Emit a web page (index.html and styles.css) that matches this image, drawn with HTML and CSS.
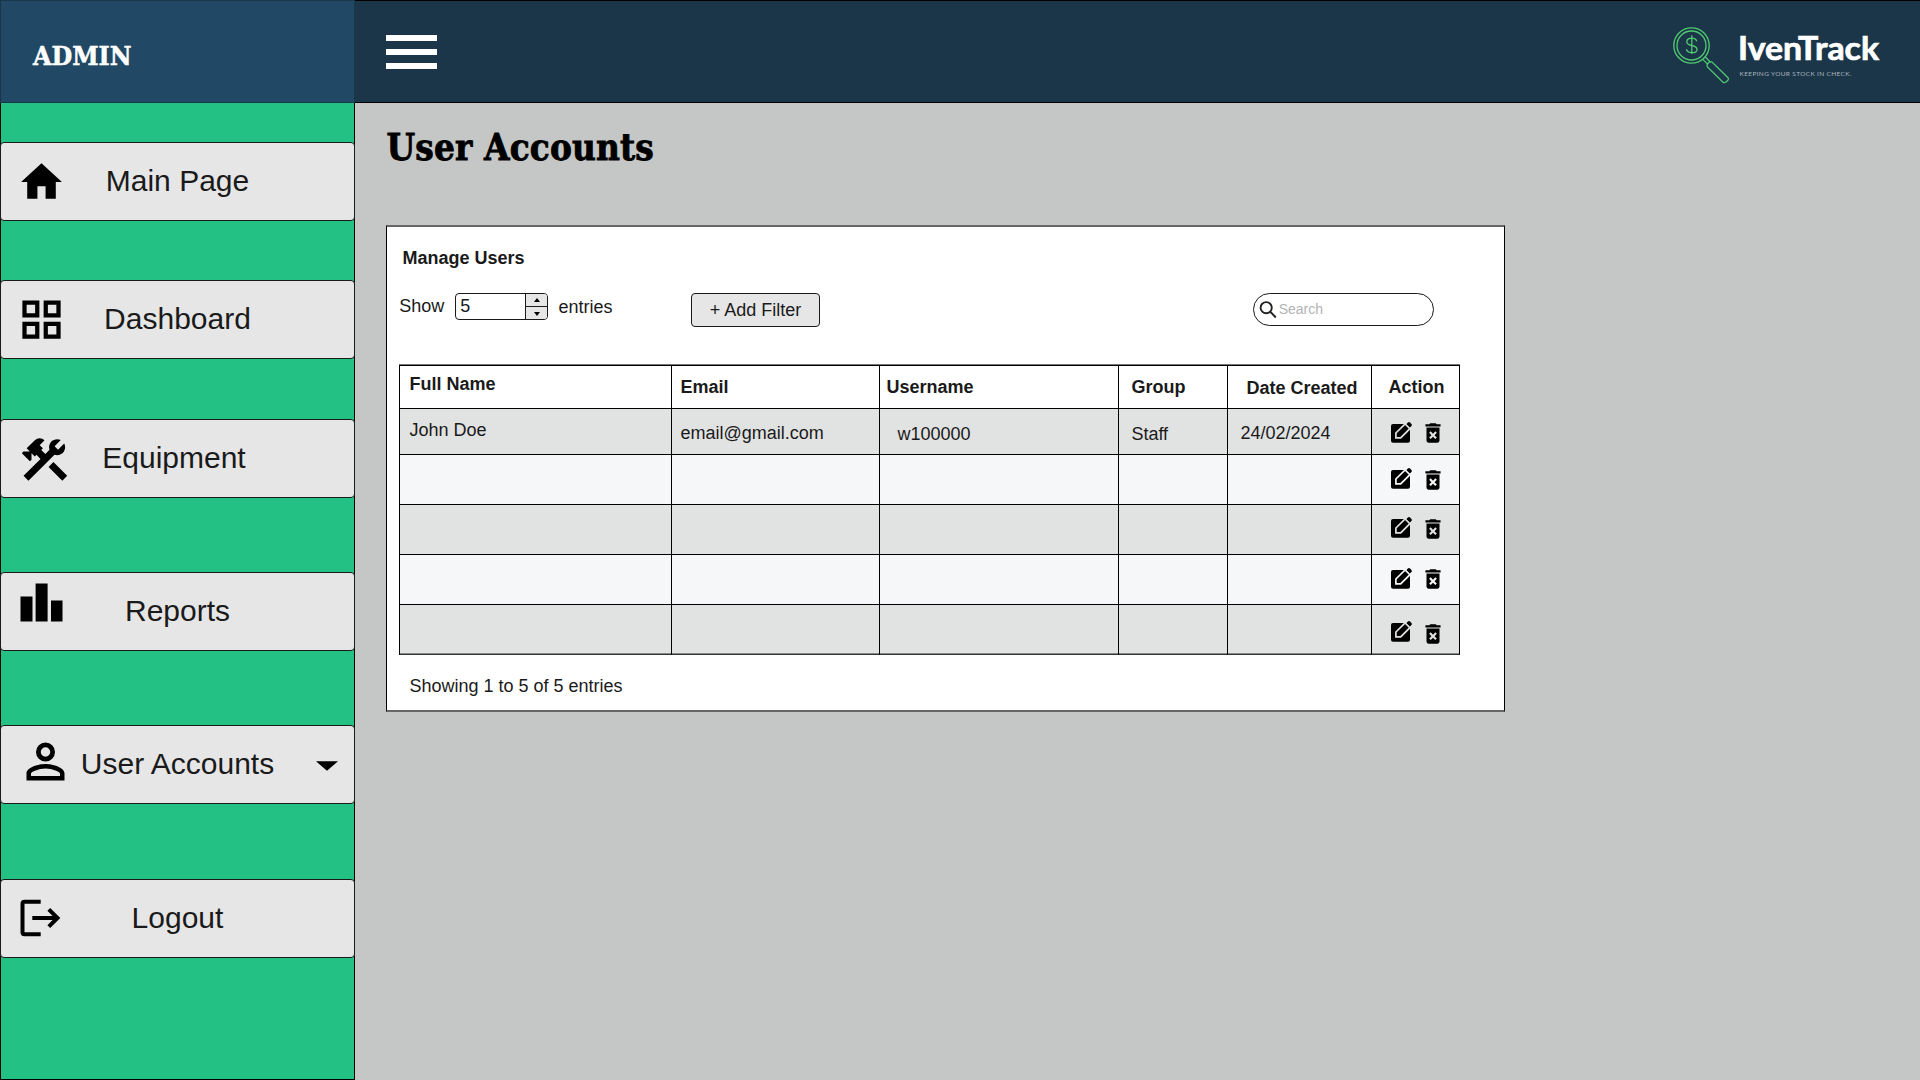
FILE: index.html
```html
<!DOCTYPE html>
<html lang="en">
<head>
<meta charset="utf-8">
<title>IvenTrack - User Accounts</title>
<link rel="stylesheet" href="styles.css">
</head>
<body>
<svg class="defs" aria-hidden="true">
  <symbol id="edit" viewBox="0 0 21 21">
    <rect x="0" y="2" width="19" height="18.7" rx="2"/>
    <path class="pencil" d="M4.900 15.900V11L14.100 1.900L18.900 6.700L9.700 15.900Z"/>
    <path d="M15.700 1.800l1.200-1.200q1.100-1 2.200 0l1.300 1.300q1 1.100 0 2.200l-1.200 1.200z"/>
  </symbol>
  <symbol id="trash" viewBox="0 0 24 24">
    <path d="M6 19c0 1.100.9 2 2 2h8c1.100 0 2-.9 2-2V7H6v12zm2.460-7.120l1.410-1.410L12 12.590l2.120-2.120 1.410 1.410L13.410 14l2.120 2.120-1.410 1.410L12 15.410l-2.120 2.120-1.410-1.410L10.590 14l-2.130-2.120zM15.500 4l-1-1h-5l-1 1H5v2h14V4z"/>
  </symbol>
</svg>
<div class="app">
  <aside class="sidebar">
    <div class="role">ADMIN</div>
    <nav class="menu">
      <a class="item">
        <svg class="ico home" viewBox="0 0 24 24" preserveAspectRatio="none"><path d="M10,20V14H14V20H19V12H22L12,3L2,12H5V20H10Z"/></svg>
        <span class="label">Main Page</span>
      </a>
      <a class="item dashboard">
        <svg class="ico grid" viewBox="0 0 24 24"><path d="M3 3v8h8V3H3zm6 6H5V5h4v4zm-6 4v8h8v-8H3zm6 6H5v-4h4v4zm4-16v8h8V3h-8zm6 6h-4V5h4v4zm-6 4v8h8v-8h-8zm6 6h-4v-4h4v4z"/></svg>
        <span class="label">Dashboard</span>
      </a>
      <a class="item equipment">
        <svg class="ico tools" viewBox="0 0 24 24"><path d="M13.78 15.3L19.78 21.3L21.89 19.14L15.89 13.14L13.78 15.3M17.5 10.1C17.11 10.1 16.69 10.05 16.36 9.91L4.97 21.25L2.86 19.14L10.27 11.74L8.5 9.96L7.78 10.66L6.33 9.25V12.11L5.63 12.81L2.11 9.25L2.81 8.55H5.62L4.22 7.14L7.78 3.58C8.95 2.41 10.83 2.41 12 3.58L9.89 5.74L11.3 7.14L10.59 7.85L12.38 9.63L14.2 7.75C14.06 7.42 14 7 14 6.63C14 4.66 15.56 3.11 17.5 3.11C18.09 3.11 18.61 3.25 19.08 3.53L16.41 6.2L17.91 7.7L20.58 5.03C20.86 5.5 21 6 21 6.63C21 8.55 19.45 10.1 17.5 10.1Z"/></svg>
        <span class="label">Equipment</span>
      </a>
      <a class="item reports">
        <svg class="ico bars" viewBox="0 0 43 40"><path d="M.5 13.500h12V38.500H.5zM15.600.5h12V38.500h-12zM31 17.500h11.500V38.500H31z"/></svg>
        <span class="label">Reports</span>
      </a>
      <a class="item accounts">
        <svg class="ico person" viewBox="0 0 24 24"><path d="M12,4A4,4 0 0,1 16,8A4,4 0 0,1 12,12A4,4 0 0,1 8,8A4,4 0 0,1 12,4M12,6A2,2 0 0,0 10,8A2,2 0 0,0 12,10A2,2 0 0,0 14,8A2,2 0 0,0 12,6M12,13C14.670,13 20,14.330 20,17V20H4V17C4,14.330 9.330,13 12,13M12,14.900C9.030,14.900 5.900,16.360 5.900,17V18.100H18.100V17C18.100,16.360 14.970,14.900 12,14.900Z"/></svg>
        <span class="label">User Accounts</span>
        <svg class="caret" viewBox="0 0 22 10"><path d="M0 .3H22L11 9.700Z"/></svg>
      </a>
      <a class="item logout">
        <svg class="ico exit" viewBox="0 0 42 38"><path d="M20.700 2.800H4.500Q2.500 2.800 2.500 4.800V33.200Q2.500 35.200 4.500 35.200H20.700M12.300 19H37.500M28.800 10.300L37.500 19L28.800 27.700"/></svg>
        <span class="label">Logout</span>
      </a>
    </nav>
  </aside>
  <div class="page">
    <header class="topbar">
      <div class="burger"><i></i><i></i><i></i></div>
      <svg class="logo" viewBox="0 0 210 62">
        <g class="glass">
          <circle cx="18.500" cy="19.500" r="17.700"/>
          <circle cx="18.500" cy="19.500" r="14.500"/>
          <path d="M23.700 15.300Q23 12.200 18.800 12.200Q13.800 12.200 13.800 15.800Q13.800 18.600 18.800 19.500Q24 20.400 24 23.400Q24 26.700 18.800 26.700Q14 26.700 13.400 23.200M18.800 9.300V28"/>
          <path d="M29.800 33.400L35 38.600M32.300 31L37.500 36.200M34.200 40.600Q33.600 38.800 34.800 37.500Q36.300 35.500 38.800 35.900L55 51.700Q56 53 54.900 54.200L52.700 56.300Q51.200 57.100 50 56.300Z"/>
        </g>
        <text class="brand" x="65" y="33.500" textLength="141" lengthAdjust="spacingAndGlyphs">IvenTrack</text>
        <text class="motto" x="66.500" y="49.500" textLength="112">KEEPING YOUR STOCK IN CHECK.</text>
      </svg>
    </header>
    <main class="content">
      <h1 class="title">User Accounts</h1>
      <section class="panel">
        <h2 class="subtitle">Manage Users</h2>
        <div class="tools-row">
          <span class="show">Show</span>
          <div class="spinner">
            <span class="value">5</span>
            <div class="steps">
              <span class="step"><svg viewBox="0 0 6 4"><path d="M0 4L3 0L6 4Z"/></svg></span>
              <span class="step"><svg viewBox="0 0 6 4"><path d="M0 0L3 4L6 0Z"/></svg></span>
            </div>
          </div>
          <span class="entries">entries</span>
          <div class="button">+ Add Filter</div>
          <div class="search">
            <svg viewBox="0 0 18 18"><circle cx="7.200" cy="6.700" r="5.600"/><path d="M11 10.500L16.800 16.500"/></svg>
            <span>Search</span>
          </div>
        </div>
        <div class="table">
          <div class="tr head">
            <div class="td name">Full Name</div><div class="td email">Email</div><div class="td user">Username</div><div class="td group">Group</div><div class="td date">Date Created</div><div class="td action">Action</div>
          </div>
          <div class="tr first odd">
            <div class="td name">John Doe</div><div class="td email">email@gmail.com</div><div class="td user">w100000</div><div class="td group">Staff</div><div class="td date">24/02/2024</div>
            <div class="td acts"><svg class="edit"><use href="#edit"/></svg><svg class="trash"><use href="#trash"/></svg></div>
          </div>
          <div class="tr second">
            <div class="td"></div><div class="td"></div><div class="td"></div><div class="td"></div><div class="td"></div>
            <div class="td acts"><svg class="edit"><use href="#edit"/></svg><svg class="trash"><use href="#trash"/></svg></div>
          </div>
          <div class="tr third odd">
            <div class="td"></div><div class="td"></div><div class="td"></div><div class="td"></div><div class="td"></div>
            <div class="td acts"><svg class="edit"><use href="#edit"/></svg><svg class="trash"><use href="#trash"/></svg></div>
          </div>
          <div class="tr fourth">
            <div class="td"></div><div class="td"></div><div class="td"></div><div class="td"></div><div class="td"></div>
            <div class="td acts"><svg class="edit"><use href="#edit"/></svg><svg class="trash"><use href="#trash"/></svg></div>
          </div>
          <div class="tr fifth odd">
            <div class="td"></div><div class="td"></div><div class="td"></div><div class="td"></div><div class="td"></div>
            <div class="td acts"><svg class="edit"><use href="#edit"/></svg><svg class="trash"><use href="#trash"/></svg></div>
          </div>
        </div>
        <p class="summary">Showing 1 to 5 of 5 entries</p>
      </section>
    </main>
  </div>
</div>
</body>
</html>
```
FILE: styles.css
```css
* { box-sizing: border-box; margin: 0; padding: 0; }
body { width: 1920px; height: 1080px; overflow: hidden; background: #c5c7c6; font: 18px/20px "Liberation Sans", Arial, sans-serif; color: #1a1a1a; }
svg { display: block; flex: none; }
.defs { width: 0; height: 0; position: absolute; }
.app { display: flex; height: 1080px; }

/* Sidebar */
.sidebar { width: 355px; height: 1080px; background: #24c184; display: flex; flex-direction: column; }
.role { height: 103px; flex: none; background: #214864; border: 1px solid #1c3649; padding: 38px 0 0 32px; color: #fff; font: bold 26.500px/34px "DejaVu Serif Condensed", "DejaVu Serif", serif; white-space: nowrap; -webkit-text-stroke: .5px #fff; }
.menu { flex: 1; border: 1px solid #000; border-top: 0; padding-top: 39px; }
.item { display: grid; grid-template-columns: 70px 1fr 70px; height: 79px; margin: 0 -1px; border: 1px solid #1a1a1a; border-radius: 4px; background: #e6e6e6; }
.dashboard { margin-top: 59px; }
.equipment { margin-top: 60px; }
.reports, .accounts { margin-top: 74px; }
.logout { margin-top: 75px; }
.label { padding-top: 21px; font-size: 30px; line-height: 34px; text-align: center; white-space: nowrap; }
.equipment .label { padding-right: 7px; }
.home { width: 49px; height: 50px; margin: 13.500px 0 0 16px; }
.grid { width: 51px; height: 51px; margin: 13px 0 0 15px; }
.tools { width: 55px; height: 55px; margin: 12px 0 0 16px; }
.bars { width: 43px; height: 40px; margin: 10px 0 0 19px; }
.person { width: 57px; height: 57px; margin: 7px 0 0 15.500px; }
.exit { width: 42px; height: 38px; margin: 19px 0 0 18.500px; fill: none; stroke: #000; stroke-width: 4; }
.caret { width: 22px; height: 10px; margin: 35px 0 0 31.500px; }

/* Top bar */
.page { flex: 1; }
.topbar { height: 103px; background: #1c3649; border: solid #000; border-width: 1px 0; display: flex; justify-content: space-between; }
.burger { width: 51px; margin: 34px 0 0 31px; display: flex; flex-direction: column; gap: 8px; }
.burger i { height: 6px; background: #fff; }
.logo { width: 210px; height: 62px; margin: 25px 37px 0 0; }
.glass { fill: none; stroke: #4fcb6f; stroke-width: 1.300; }
.brand { font: bold 32px Lato, sans-serif; fill: #fff; stroke: #fff; stroke-width: .7px; }
.motto { font: 6.500px Lato, sans-serif; fill: #a9b4bd; }

/* Content */
.content { padding: 0 0 0 31px; }
.title { height: 122px; padding: 23px 0 0 .5px; font: bold 36.500px/44px "DejaVu Serif Condensed", "DejaVu Serif", serif; letter-spacing: .15px; color: #000; white-space: nowrap; -webkit-text-stroke: .8px #000; }
.panel { width: 1119px; height: 487px; background: #fff; border: solid #000; border-width: 2px 1px; border-top-color: #666; border-bottom-color: #666; padding: 21px 0 0 12px; }
.subtitle { margin-left: 3.400px; font-size: 18px; line-height: 20px; }
.tools-row { display: flex; height: 71px; margin-top: 25px; align-items: flex-start; }
.show { width: 55px; padding: 3px 0 0 .3px; }
.spinner { width: 93px; height: 27px; margin-left: 1px; border: 1px solid #1a1a1a; border-radius: 4px; display: flex; overflow: hidden; }
.value { flex: 1; padding: 2px 0 0 4.300px; }
.steps { width: 22px; border-left: 1px solid #1a1a1a; background: #e6e6e6; }
.step { height: 13px; display: flex; align-items: center; justify-content: center; }
.step:first-child { border-bottom: 1px solid #1a1a1a; }
.step svg { width: 6px; height: 4px; }
.entries { width: 143px; padding: 4px 0 0 10.500px; }
.button { width: 129px; height: 34px; border: 1px solid #1a1a1a; border-radius: 4px; background: #e6e6e6; line-height: 20px; padding-top: 6px; text-align: center; }
.search { width: 181px; height: 33px; margin-left: 433px; border: 1px solid #1a1a1a; border-radius: 17px; display: flex; padding: 7px 0 0 5px; font-size: 14px; line-height: 16px; color: #b3b3b3; }
.search svg { width: 18px; height: 18px; fill: none; stroke: #222; stroke-width: 1.900; }
.search span { margin-left: 1.700px; }

/* Table */
.table { width: 1061px; border: solid #000; border-width: 1px 0 0 1px; margin-top: 1px; box-shadow: 0 -1px #777; }
.tr { --row: #f6f7f9; display: grid; grid-template-columns: 272px 208px 239px 109px 144px 88px; height: 50px; background: var(--row); }
.td { border: solid #000; border-width: 0 1px 1px 0; white-space: nowrap; }
.odd { --row: #e1e3e2; }
.head { --row: #fff; height: 43px; font-weight: bold; }
.first { height: 46px; }
.fifth .td { border-bottom-color: #333; box-shadow: inset 0 -1px #8a8a8a; }
.name { padding: 8px 0 0 9.400px; }
.email { padding: 11px 0 0 8.400px; }
.user { padding: 11px 0 0 6.500px; }
.group { padding: 11px 0 0 12.400px; }
.date { padding: 12px 0 0 18.500px; }
.action { padding: 11px 0 0 16.400px; }
.first .name { padding-top: 11px; }
.first .email { padding-top: 14px; }
.first .user { padding: 15px 0 0 17.500px; }
.first .group { padding-top: 15px; }
.first .date { padding: 14px 0 0 12.400px; }
.acts { display: flex; padding-left: 19px; }
.pencil { stroke: var(--row); stroke-width: 1.700; }
.edit { width: 21px; height: 21px; margin-top: 13px; }
.trash { width: 26px; height: 26px; margin: 11.200px 0 0 8.400px; }
.second .trash { margin-top: 12px; }
.third .edit { margin-top: 12px; }
.fourth .trash { margin-top: 10.800px; }
.fifth .edit { margin-top: 16px; }
.fifth .trash { margin-top: 15.600px; }
.summary { margin: 21px 0 0 10.400px; }
```
